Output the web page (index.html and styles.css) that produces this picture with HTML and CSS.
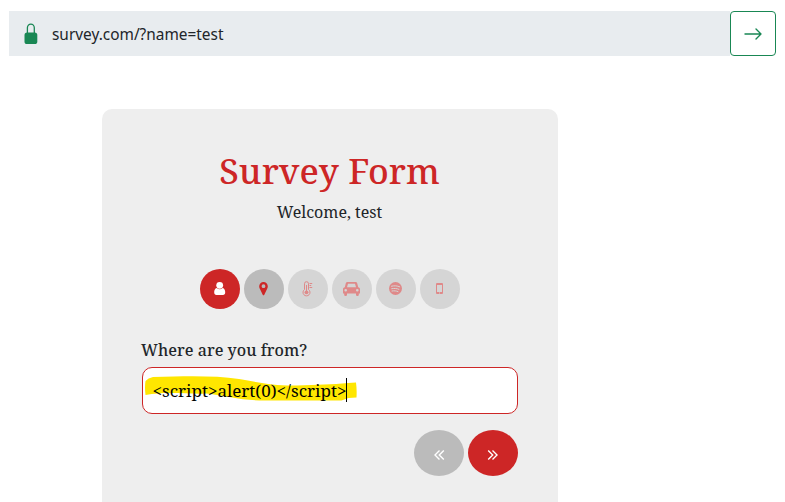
FILE: index.html
```html
<!DOCTYPE html>
<html lang="en">
<head>
<meta charset="utf-8">
<title>Survey Form</title>
<link rel="stylesheet" href="styles.css">
</head>
<body>
<header class="address-bar">
  <div class="address">
    <svg class="lock" width="14" height="22" viewBox="0 0 14 22"><path d="M3.400 10V4.800a3.400 3.700 0 0 1 6.900 0V10" fill="none" stroke="#198754" stroke-width="1.300"/><rect x=".5" y="9.500" width="12.800" height="11.500" rx="2.600" fill="#198754"/></svg>
    <span class="url">survey.com/?name=test</span>
  </div>
  <button class="go" aria-label="Go"><svg width="20" height="16" viewBox="0 0 20 16" fill="none" stroke="#198754" stroke-width="1.400" stroke-linecap="round" stroke-linejoin="round"><path d="M2 8h16M13 3l5 5-5 5"/></svg></button>
</header>
<main class="card">
  <h1 class="title">Survey Form</h1>
  <p class="welcome">Welcome, test</p>
  <div class="steps">
    <span class="step active"><svg width="20" height="20" viewBox="0 0 20 20" fill="#fff"><circle cx="9.700" cy="6.300" r="3.400"/><path d="M6.800 8.900c1.800 1.700 4 1.700 5.800 0 2 .4 2.700 2.400 2.600 4.700 0 1.400-.8 2.400-2.200 2.400H6.400c-1.400 0-2.200-1-2.200-2.400C4.100 11.300 4.800 9.300 6.800 8.900z"/></svg></span>
    <span class="step next"><svg width="20" height="20" viewBox="0 0 20 20"><path fill="#cd2626" fill-rule="evenodd" d="M9.500 3a4.300 4.300 0 0 1 4.300 4.300c0 1.300-.5 2.100-1 3.100l-2.500 5.300q-.8 1-1.600 0L6.200 10.400c-.5-1-1-1.800-1-3.100A4.300 4.300 0 0 1 9.500 3zm0 2.300a1.900 1.900 0 1 0 0 3.800 1.900 1.900 0 0 0 0-3.800z"/></svg></span>
    <span class="step"><svg width="20" height="20" viewBox="0 0 20 20" fill="none" stroke="#df8989" stroke-width="1"><path d="M6.500 10.500V4.700a2 2 0 0 1 4 0v5.800a3.500 3.500 0 1 1-4 0zM11.500 4.500h2.700M11.500 6.500h1.700M11.500 8.500h2.700M8.500 6v7"/><circle cx="8.500" cy="13.300" r="1.900" fill="#df8989" stroke="none"/></svg></span>
    <span class="step"><svg width="20" height="20" viewBox="0 0 20 20"><path fill="#df8989" fill-rule="evenodd" d="M5.500 3h8q1.400 0 1.700 1.200l1 4.100c1.200.1 1.800.9 1.800 2v4.200h-1.200v1.400q0 1-1.400 1t-1.400-1v-1.400H5v1.400q0 1-1.400 1t-1.400-1v-1.400H1v-4.200c0-1.100.6-1.900 1.800-2l1-4.100Q4.100 3 5.500 3zm.5 1.700-1 3.600h9l-1-3.600zM3.700 10a1.300 1.300 0 1 0 0 2.600 1.300 1.300 0 0 0 0-2.600zm11.600 0a1.300 1.300 0 1 0 0 2.600 1.300 1.300 0 0 0 0-2.600z"/></svg></span>
    <span class="step"><svg width="20" height="20" viewBox="0 0 20 20"><circle cx="9.500" cy="9.500" r="6.500" fill="#df8989"/><path d="M5.500 7.200c3-.7 5.700-.5 8.200.6M5.700 9.700c2.800-.5 5-.3 7.200.6M6 12c2.300-.4 4.200-.2 6 .6" fill="none" stroke="#d5d5d5" stroke-linecap="round"/></svg></span>
    <span class="step"><svg width="20" height="20" viewBox="0 0 20 20"><path fill="#df8989" fill-rule="evenodd" d="M7 4h5q1 0 1 1v9q0 1-1 1H7q-1 0-1-1V5q0-1 1-1zm0 2v7h5V6zM9 13.500v1h1v-1z"/></svg></span>
  </div>
  <label class="question" for="from">Where are you from?</label>
  <div class="field" id="from">
    <svg class="highlight" width="214" height="28" viewBox="0 0 214 28"><path fill="#ffe600" d="M.5 5Q3 2 8 1C43 0 71-.5 94 3c22 4 36 7 58 6.500 20-1 35-1 51-2.500l8-.5q1 7 .5 15l-8 .5-7 2.500H123C98 25 82 20 61 17.500 45 18.500 22 15 .5 19Q-.5 11 .5 5z"/></svg>
    <span class="value">&lt;script&gt;alert(0)&lt;/script&gt;</span><span class="caret"></span>
  </div>
  <div class="nav">
    <button class="round back" aria-label="Back"><svg width="12" height="12" viewBox="0 0 12 12"><path d="M6.500 1.500 2 6l4.500 4.500M10.800 1.500 6.300 6l4.500 4.500"/></svg></button>
    <button class="round" aria-label="Next"><svg width="12" height="12" viewBox="0 0 12 12"><path d="M1.200 1.500 5.700 6l-4.500 4.500M5.500 1.500 10 6l-4.500 4.500"/></svg></button>
  </div>
</main>
</body>
</html>
```
FILE: styles.css
```css
* { box-sizing: border-box; }
body { margin: 0; height: 502px; overflow: hidden; background: #fff; color: #212529; font-family: "Noto Serif", "Droid Serif", "DejaVu Serif Condensed", "DejaVu Serif", serif; }
svg { display: block; flex: none; }
button { padding: 0; border: 0; }
.address-bar { display: flex; margin: 11px 9px 0; height: 45px; }
.address { flex: 1; display: flex; align-items: center; padding-left: 15px; gap: 14px; background: #e8ecef; }
.url { font: 15.4px/24px "Noto Sans", sans-serif; padding-top: 3px; }
.go { width: 46px; display: flex; align-items: center; justify-content: center; border: 1px solid #198754; border-radius: 4px; background: #fff; }
.card { width: 456px; height: 410px; margin: 53px 0 0 102px; padding: 40px 40px 0 39px; border-radius: 10px 10px 0 0; background: #eee; }
.title { margin: 0; font-size: 35.4px; line-height: 42px; font-weight: 500; text-align: center; color: #cd2626; white-space: nowrap; }
.welcome { margin: 9px 0 0; font-size: 16px; line-height: 24px; text-align: center; }
.steps { display: flex; justify-content: center; gap: 4px; margin: 45px 0 0 1px; }
.step { width: 40px; height: 40px; display: flex; align-items: center; justify-content: center; border-radius: 50%; background: #d5d5d5; }
.step.active { background: #cd2626; }
.step.next { background: #bbb; }
.question { display: block; margin-top: 29px; font-size: 16px; line-height: 24px; font-weight: 500; letter-spacing: 0.03px; white-space: nowrap; }
.field { position: relative; display: flex; align-items: center; height: 47px; margin: 5px 0 0 1px; padding-left: 9.5px; border: 1px solid #cd2626; border-radius: 10px; background: #fff; color: #000; }
.highlight { position: absolute; left: 2px; top: 8px; }
.value { position: relative; font-size: 17px; line-height: 24px; white-space: nowrap; }
.caret { position: relative; width: 1px; height: 24px; margin: -1px 0 0 -0.5px; background: #000; }
.nav { display: flex; justify-content: flex-end; gap: 4px; margin-top: 16px; }
.round { width: 50px; height: 46px; display: flex; align-items: center; justify-content: center; border-radius: 50%; background: #cd2626; padding-top: 3px; }
.round.back { background: #bbb; }
.round svg { fill: none; stroke: #fff; stroke-width: 1.4; }
```
